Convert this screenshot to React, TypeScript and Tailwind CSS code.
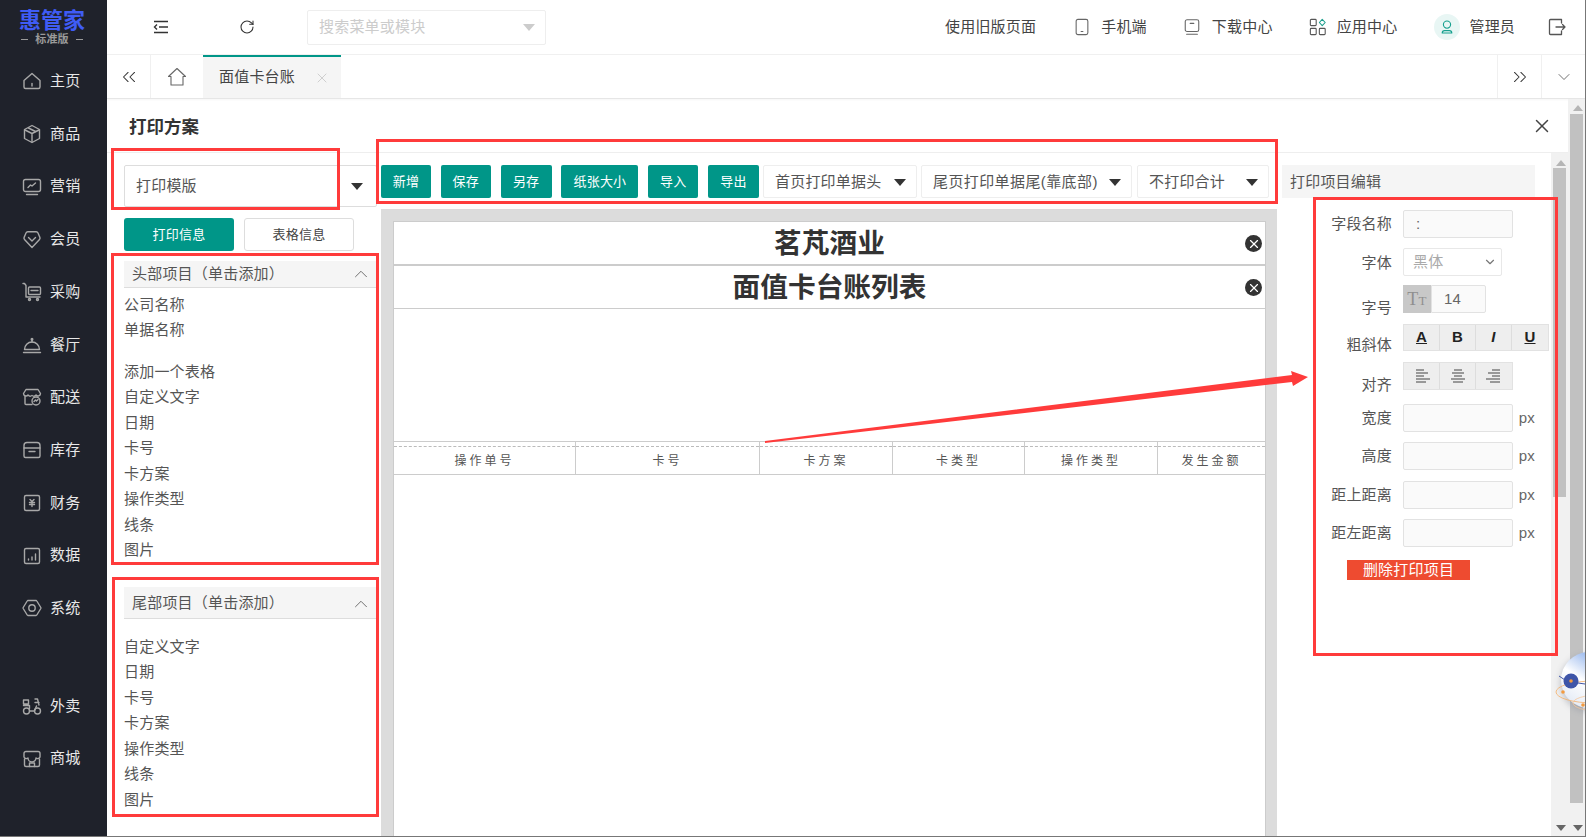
import type { ReactNode } from "react";
import { ChevronDown, ChevronUp, ChevronsLeft, ChevronsRight, RotateCw, X } from "lucide-react";

const Ico = ({ children, size = 20, color = "#a8a8a8", sw = 1.4 }: { children: ReactNode; size?: number; color?: string; sw?: number }) => (
  <svg width={size} height={size} viewBox="0 0 20 20" fill="none" stroke={color} strokeWidth={sw} strokeLinejoin="round" strokeLinecap="round" className="shrink-0">
    {children}
  </svg>
);

const navTop: { label: string; icon: ReactNode }[] = [
  { label: "主页", icon: <><path d="M2 9.5 10 2.5l8 7v6.5a1.5 1.5 0 0 1-1.5 1.5h-13A1.5 1.5 0 0 1 2 16z" /><path d="M10 12.5v2.5" /></> },
  { label: "商品", icon: <><path d="M10 1.5 17.5 5.5v9L10 18.5l-7.5-4v-9z" /><path d="M3 6l7 3.5L17 6M10 9.5v8.5" /><path d="M6.5 4 13.5 7.5" /></> },
  { label: "营销", icon: <><rect x="1.5" y="2.5" width="17" height="12" rx="2" /><path d="M6 10.5l2.5-2.5 1.5 1 3.5-3" /><path d="M4.5 17.5h11" /></> },
  { label: "会员", icon: <><path d="M10 18.5 2.5 10.5a2 2 0 0 1-.3-2.3L4 4a2 2 0 0 1 1.8-1.2h8.4A2 2 0 0 1 16 4l1.8 4.2a2 2 0 0 1-.3 2.3z" /><path d="M6.5 8.5 10 12l3.5-3.5" /></> },
  { label: "采购", icon: <><path d="M1 1.5h1.5L4 3.5V15h14" /><rect x="6.5" y="5" width="12" height="7.5" rx="1" /><path d="M9 8.5h7" /><circle cx="7.5" cy="17.5" r="1" /><circle cx="15.5" cy="17.5" r="1" /></> },
  { label: "餐厅", icon: <><path d="M2.5 14.5a7.5 7.5 0 0 1 15 0z" /><path d="M1.5 17.5h17" /><path d="M10 7V5.2" /><circle cx="10" cy="4.2" r="0.8" /></> },
  { label: "配送", icon: <><path d="M4 2.5h12l2.5 4a2.5 2.5 0 0 1-4.5 1.5 3 3 0 0 1-4 .5 3 3 0 0 1-4-.5A2.5 2.5 0 0 1 1.5 6.5z" /><path d="M3 9v7.5a1 1 0 0 0 1 1h6" /><circle cx="14" cy="14" r="4" /><path d="M12 14.5l1.5-1.5 1 1 1.5-1.5" /></> },
  { label: "库存", icon: <><path d="M2 8V5.5A3 3 0 0 1 5 2.5h10a3 3 0 0 1 3 3V8z" /><path d="M2 8v8a1.5 1.5 0 0 0 1.5 1.5h13A1.5 1.5 0 0 0 18 16V8" /><path d="M7 11.5h6" /></> },
  { label: "财务", icon: <><rect x="2.5" y="2.5" width="15" height="15" rx="1.5" /><path d="M8 6.5l2 2 2-2M7.5 9.5h5M7.5 11.5h5M10 8.5v5" /></> },
  { label: "数据", icon: <><rect x="2.5" y="2.5" width="15" height="15" rx="1.5" /><path d="M6.5 14v-1M10 14v-3M13.5 14V8" /></> },
  { label: "系统", icon: <><path d="M6 2.5h8a1 1 0 0 1 .8.5l4 6.5a1 1 0 0 1 0 1l-4 6.5a1 1 0 0 1-.8.5H6a1 1 0 0 1-.8-.5l-4-6.5a1 1 0 0 1 0-1l4-6.5A1 1 0 0 1 6 2.5z" /><circle cx="10" cy="10" r="3.2" /></> },
];

const navBottom: { label: string; icon: ReactNode }[] = [
  { label: "外卖", icon: <><circle cx="4.5" cy="15" r="3" /><circle cx="15.5" cy="15" r="3" /><path d="M7.5 15h5l2-5M1.5 9.5h6v3M1.5 4h5v4h-5zM13 3h2.5l1.5 6M13 6.5h4" /></> },
  { label: "商城", icon: <><path d="M4 2.5h12a2 2 0 0 1 2 2V8a2.5 2.5 0 0 1-4 1 3.5 3.5 0 0 1-8 0 2.5 2.5 0 0 1-4-1V4.5a2 2 0 0 1 2-2z" /><path d="M2.5 10v6a1.5 1.5 0 0 0 1.5 1.5h12a1.5 1.5 0 0 0 1.5-1.5v-6" /><path d="M7.5 17.5V14h5v3.5" /></> },
];

const headItemsA = ["公司名称", "单据名称"];
const headItemsB = ["添加一个表格", "自定义文字", "日期", "卡号", "卡方案", "操作类型", "线条", "图片"];
const footItems = ["自定义文字", "日期", "卡号", "卡方案", "操作类型", "线条", "图片"];

const toolButtons = [
  { label: "新增", w: "w-[50px]" },
  { label: "保存", w: "w-[50px]" },
  { label: "另存", w: "w-[51px]" },
  { label: "纸张大小", w: "w-[77px]" },
  { label: "导入", w: "w-[50px]" },
  { label: "导出", w: "w-[51px]" },
];

const tableCols = [
  { label: "操作单号", w: "w-[182px]" },
  { label: "卡号", w: "w-[184px]" },
  { label: "卡方案", w: "w-[133px]" },
  { label: "卡类型", w: "w-[132px]" },
  { label: "操作类型", w: "w-[133px]" },
  { label: "发生金额", w: "flex-1" },
];

const Caret = ({ className = "" }: { className?: string }) => (
  <svg width="12" height="7" viewBox="0 0 12 7" className={`shrink-0 ${className}`}>
    <polygon points="0,0 12,0 6,7" fill="currentColor" />
  </svg>
);

const CloseDot = () => (
  <span className="absolute right-[3px] top-[13px] flex h-[17px] w-[17px] items-center justify-center rounded-full bg-[#333] text-white">
    <X size={14} strokeWidth={2} />
  </span>
);

const ItemRow = ({ text }: { text: string }) => (
  <div className="flex h-[25.5px] items-center text-[15px] text-[#555]">{text}</div>
);

const PxInput = ({ label, className }: { label: string; className: string }) => (
  <div className={`flex h-[28px] items-center ${className}`}>
    <span className="w-[110px] shrink-0 text-right text-[15px] text-[#555]">{label}</span>
    <span className="ml-[11px] h-full w-[110px] rounded-[2px] border border-[#e2e2e2] bg-[#fafafa]" />
    <span className="ml-[6px] text-[15px] text-[#666]">px</span>
  </div>
);

const ScrollArrow = ({ up = false }: { up?: boolean }) => (
  <svg width="10" height="6" viewBox="0 0 10 6" className="mx-auto shrink-0 text-[#666]">
    <polygon points={up ? "0,6 10,6 5,0" : "0,0 10,0 5,6"} fill={up ? "#b5b5b5" : "currentColor"} />
  </svg>
);

export default function App() {
  return (
    <div className="relative flex h-[837px] w-[1586px] overflow-hidden border-r border-b border-[#777] bg-white font-['Liberation_Sans','Noto_Sans_CJK_SC',sans-serif] tracking-[0.2px] text-[#333]">
      {/* Sidebar */}
      <aside className="flex w-[107px] shrink-0 flex-col bg-[#1f222b]">
        <div className="flex h-[55px] flex-col items-center pt-[9px] pr-[3px]">
          <div className="text-[22px] leading-[24px] font-bold tracking-normal text-[#3f5cf5]">惠管家</div>
          <div className="flex items-center gap-[7px] text-[11px] leading-[13px] font-bold text-[#9a9a9a]">
            <span className="h-[1px] w-[7px] bg-[#9a9a9a]" />
            标准版
            <span className="h-[1px] w-[7px] bg-[#9a9a9a]" />
          </div>
        </div>
        {navTop.map((n) => (
          <div key={n.label} className="flex h-[52.7px] items-center gap-[8px] pl-[22px] text-[15px] text-[#e8e8e8]">
            <Ico>{n.icon}</Ico>
            {n.label}
          </div>
        ))}
        <div className="h-[45px]" />
        {navBottom.map((n) => (
          <div key={n.label} className="flex h-[52.7px] items-center gap-[8px] pl-[22px] text-[15px] text-[#e8e8e8]">
            <Ico>{n.icon}</Ico>
            {n.label}
          </div>
        ))}
      </aside>

      <div className="flex min-w-0 flex-1 flex-col">
        {/* Top bar */}
        <header className="flex h-[55px] shrink-0 items-center border-b border-[#f0f0f0] text-[15px] text-[#444]">
          <svg width="16" height="14" viewBox="0 0 16 14" fill="none" stroke="#333" strokeWidth="1.4" className="ml-[46px] shrink-0">
            <path d="M1 1.5h14M6 7h9M1 12.5h14M4 4.5 1.5 7 4 9.5" />
          </svg>
          <RotateCw size={16} strokeWidth={1.6} className="ml-[70px] shrink-0 text-[#333]" />
          <div className="ml-[52px] flex h-[35px] w-[239px] items-center justify-between rounded-[2px] border border-[#eee] pr-[10px] pl-[11px] text-[#ccc]">
            搜索菜单或模块
            <Caret className="text-[#ccc]" />
          </div>
          <span className="ml-[399px]">使用旧版页面</span>
          <span className="ml-[37px]">
            <Ico size={18} color="#666" sw={1.2}>
              <rect x="3.5" y="1.5" width="13" height="17" rx="2" />
              <path d="M9 15h2" />
            </Ico>
          </span>
          <span className="ml-[10px]">手机端</span>
          <span className="ml-[36px]">
            <Ico size={18} color="#666" sw={1.2}>
              <rect x="2.5" y="2" width="15" height="13" rx="2" />
              <path d="M8 6h4M4 18h12" />
            </Ico>
          </span>
          <span className="ml-[11px]">下载中心</span>
          <span className="ml-[36px]">
            <Ico size={18} color="#555" sw={1.2}>
              <rect x="1.5" y="1.5" width="6.5" height="7" rx="1" />
              <rect x="1.5" y="11.5" width="6.5" height="7" rx="1" />
              <rect x="11.5" y="11.5" width="6.5" height="7" rx="1" />
              <path d="M14.7 1.5 18 5l-3.3 3.5L11.5 5z" stroke="#1a9e8c" />
            </Ico>
          </span>
          <span className="ml-[10px]">应用中心</span>
          <span className="ml-[37px] flex h-[26px] w-[26px] items-center justify-center rounded-full bg-[#e8f6f4]">
            <Ico size={16} color="#15a08e" sw={1.4}>
              <circle cx="10" cy="7" r="4.5" />
              <path d="M4 17.5a3 3 0 0 1 3-3h6a3 3 0 0 1 3 3z" />
            </Ico>
          </span>
          <span className="ml-[9px]">管理员</span>
          <span className="ml-[32px]">
            <Ico size={20} color="#555" sw={1.3}>
              <path d="M14.5 6V2.5h-11a1 1 0 0 0-1 1v13a1 1 0 0 0 1 1h11V14" />
              <path d="M9 10h9M15.5 7.5 18 10l-2.5 2.5" />
            </Ico>
          </span>
        </header>

        {/* Tabs */}
        <div className="flex h-[44px] shrink-0 items-stretch border-b border-[#e6e6e6] shadow-[0_1px_2px_rgba(0,0,0,0.04)]">
          <div className="flex w-[44px] items-center justify-center border-r border-[#f0f0f0]">
            <ChevronsLeft size={22} strokeWidth={1.1} className="text-[#333]" />
          </div>
          <div className="flex w-[52px] items-center justify-center">
            <Ico size={20} color="#666" sw={1.1}>
              <path d="M1.5 9.5 10 1.5l8.5 8H16v8.5H4V9.5z" />
            </Ico>
          </div>
          <div className="flex w-[138px] items-center border-t-2 border-[#009688] bg-[#f5f5f5] pl-[16px] text-[15px] text-[#444]">
            面值卡台账
            <X size={16} strokeWidth={1} className="ml-[19px] text-[#bbb]" />
          </div>
          <div className="flex-1" />
          <div className="flex w-[44px] items-center justify-center border-l border-[#f0f0f0]">
            <ChevronsRight size={22} strokeWidth={1.1} className="text-[#333]" />
          </div>
          <div className="flex w-[44px] items-center justify-center border-l border-[#f0f0f0]">
            <ChevronDown size={20} strokeWidth={1} className="text-[#555]" />
          </div>
        </div>

        {/* Modal */}
        <div className="flex min-h-0 flex-1">
          <div className="flex min-w-0 flex-1 flex-col">
            <div className="flex h-[54px] shrink-0 items-center justify-between border-b border-[#eee] pr-[15px] pl-[22px]">
              <h2 className="pt-[3px] text-[17.5px] font-bold tracking-normal text-[#333]">打印方案</h2>
              <X size={22} strokeWidth={1.6} className="text-[#444]" />
            </div>

            <div className="flex min-h-0 flex-1">
              <div className="flex min-w-0 flex-1 overflow-hidden pt-[12px] pl-[17px]">
                {/* Left column */}
                <div className="w-[253px] shrink-0">
                  <div className="flex h-[42px] items-center justify-between rounded-[2px] border border-[#ddd] pr-[13px] pl-[11px] text-[15px] text-[#555]">
                    打印模版
                    <Caret className="text-[#333]" />
                  </div>
                  <div className="mt-[11px] flex gap-[10px]">
                    <button className="h-[33px] w-[110px] rounded-[3px] bg-[#009688] pt-[1px] text-[13px] tracking-[0.3px] text-white">打印信息</button>
                    <button className="h-[33px] w-[110px] rounded-[3px] border border-[#ddd] bg-white pt-[1px] text-[13px] tracking-[0.3px] text-[#444]">表格信息</button>
                  </div>
                  <div className="mt-[10px] flex h-[27px] items-center justify-between border-b border-[#ddd] bg-[#f5f5f5] pr-[5px] pl-[8px] text-[15px] text-[#555]">
                    头部项目（单击添加）
                    <ChevronUp size={22} strokeWidth={1} className="text-[#666]" />
                  </div>
                  <div className="mt-[4px]">
                    {headItemsA.map((t) => (
                      <ItemRow key={t} text={t} />
                    ))}
                  </div>
                  <div className="mt-[16px]">
                    {headItemsB.map((t) => (
                      <ItemRow key={t} text={t} />
                    ))}
                  </div>
                  <div className="mt-[24px] flex h-[32px] items-center justify-between border-b border-[#ddd] bg-[#f5f5f5] pt-[2px] pr-[5px] pl-[8px] text-[15px] text-[#555]">
                    尾部项目（单击添加）
                    <ChevronUp size={22} strokeWidth={1} className="text-[#666]" />
                  </div>
                  <div className="mt-[15px]">
                    {footItems.map((t) => (
                      <ItemRow key={t} text={t} />
                    ))}
                  </div>
                </div>

                {/* Middle column */}
                <div className="ml-[4px] flex w-[896px] shrink-0 flex-col">
                  <div className="flex h-[33px] shrink-0">
                    {toolButtons.map((b, i) => (
                      <button key={b.label} className={`h-full rounded-[2px] bg-[#009688] pt-[1px] text-[13px] text-white ${b.w} ${i ? "ml-[9.8px]" : ""}`}>
                        {b.label}
                      </button>
                    ))}
                    <div className="ml-[4px] flex w-[154px] items-center justify-between rounded-[2px] border border-[#eee] pt-[1px] pr-[10px] pl-[11px] text-[15px] text-[#555]">
                      首页打印单据头
                      <Caret className="text-[#333]" />
                    </div>
                    <div className="ml-[4px] flex w-[211px] items-center justify-between rounded-[2px] border border-[#eee] pt-[1px] pr-[10px] pl-[11px] text-[15px] text-[#555]">
                      <span className="tracking-[0.4px] whitespace-nowrap">尾页打印单据尾(靠底部)</span>
                      <Caret className="text-[#333]" />
                    </div>
                    <div className="ml-[5px] flex w-[132px] items-center justify-between rounded-[2px] border border-[#eee] pt-[1px] pr-[10px] pl-[11px] text-[15px] text-[#555]">
                      不打印合计
                      <Caret className="text-[#333]" />
                    </div>
                  </div>

                  <div className="mt-[11px] flex min-h-0 flex-1 flex-col overflow-hidden bg-[#dcdcdc] pt-[12px] pr-[11px] pl-[12px]">
                    <div className="flex flex-1 flex-col border-x border-t border-[#ccc] bg-white">
                      <div className="relative h-[44px] border-b-2 border-[#ccc] text-center text-[27.7px] leading-[44px] font-bold tracking-normal text-[#333]">
                        茗芃酒业
                        <CloseDot />
                      </div>
                      <div className="relative h-[43px] border-b border-[#ccc] text-center text-[27.7px] leading-[44px] font-bold tracking-normal text-[#333]">
                        面值卡台账列表
                        <CloseDot />
                      </div>
                      <div className="mt-[132px] flex h-[34px] border-y border-[#ccc]">
                        {tableCols.map((c) => (
                          <div key={c.label} className={`flex flex-col border-r border-[#ccc] last:border-r-0 ${c.w}`}>
                            <div className="h-[5px] shrink-0 border-b border-dashed border-[#bbb]" />
                            <div className="flex flex-1 items-center justify-center text-[12px] tracking-[3px] text-[#555]">{c.label}</div>
                          </div>
                        ))}
                      </div>
                    </div>
                  </div>
                </div>

                {/* Right column */}
                <div className="ml-[5px] w-[253px] shrink-0">
                  <div className="flex h-[33px] items-center bg-[#f5f5f5] pt-[1px] pl-[8px] text-[15px] text-[#555]">打印项目编辑</div>
                  <div className="mt-[12px] flex h-[28px] items-center">
                    <span className="w-[110px] shrink-0 pt-[1px] text-right text-[15px] text-[#555]">字段名称</span>
                    <span className="ml-[11px] flex h-full w-[110px] items-center rounded-[2px] border border-[#e2e2e2] bg-[#fafafa] pl-[12px] text-[15px] text-[#666]">:</span>
                  </div>
                  <div className="mt-[10px] flex h-[28px] items-center">
                    <span className="w-[110px] shrink-0 pt-[3px] text-right text-[15px] text-[#555]">字体</span>
                    <span className="ml-[11px] flex h-full w-[99px] items-center justify-between rounded-[2px] border border-[#e8e8e8] pr-[4px] pl-[9px] text-[15px] text-[#aaa]">
                      黑体
                      <ChevronDown size={14} strokeWidth={2} className="text-[#777]" />
                    </span>
                  </div>
                  <div className="mt-[9px] flex h-[28px]">
                    <span className="w-[110px] shrink-0 pt-[12px] text-right text-[15px] text-[#555]">字号</span>
                    <span className="ml-[11px] flex h-full w-[28px] items-baseline justify-center bg-[#c8c8c8] pt-[2px] font-['Liberation_Serif',serif] text-[18px] leading-[24px] text-[#8f8f8f]">
                      T<span className="text-[13px]">T</span>
                    </span>
                    <span className="flex h-full w-[55px] items-center rounded-r-[2px] border border-[#e2e2e2] bg-[#fafafa] pl-[12px] text-[15px] text-[#666]">14</span>
                  </div>
                  <div className="mt-[11px] flex h-[27px]">
                    <span className="w-[110px] shrink-0 pt-[10px] text-right text-[15px] text-[#555]">粗斜体</span>
                    <div className="ml-[11px] flex h-full shrink-0 border border-[#e2e2e2] bg-[#eee] text-[15px] text-[#222]">
                      <span className="flex w-[36px] items-center justify-center border-r border-[#ddd] font-bold underline">A</span>
                      <span className="flex w-[36px] items-center justify-center border-r border-[#ddd] font-bold">B</span>
                      <span className="flex w-[36px] items-center justify-center border-r border-[#ddd] font-bold italic">I</span>
                      <span className="flex w-[36px] items-center justify-center font-bold underline">U</span>
                    </div>
                  </div>
                  <div className="mt-[11px] flex h-[28px]">
                    <span className="w-[110px] shrink-0 pt-[12px] text-right text-[15px] text-[#555]">对齐</span>
                    <div className="ml-[11px] flex h-full shrink-0 border border-[#e2e2e2] bg-[#eee]">
                      {["M3 3h8M3 6h12M3 9h8M3 12h14M3 15h10", "M5 3h8M3 6h12M5 9h8M2 12h14M4 15h10", "M7 3h8M3 6h12M7 9h8M1 12h14M5 15h10"].map((d, i) => (
                        <span key={d} className={`flex w-[36px] items-center justify-center ${i < 2 ? "border-r border-[#ddd]" : ""}`}>
                          <svg width="18" height="18" viewBox="0 0 18 18" fill="none" stroke="#444" strokeWidth="1">
                            <path d={d} />
                          </svg>
                        </span>
                      ))}
                    </div>
                  </div>
                  <PxInput label="宽度" className="mt-[14px]" />
                  <PxInput label="高度" className="mt-[10px]" />
                  <PxInput label="距上距离" className="mt-[11px]" />
                  <PxInput label="距左距离" className="mt-[10px]" />
                  <button className="mt-[13px] ml-[65px] h-[20px] w-[123px] bg-[#ee4b30] text-[15px] leading-[20px] text-white">删除打印项目</button>
                </div>
              </div>

              {/* Inner scrollbar */}
              <div className="flex w-[17px] shrink-0 flex-col bg-[#f1f1f1] pt-[7px] pb-[5px] pl-[2px]">
                <ScrollArrow up />
                <div className="mt-[2px] h-[329px] w-[13px] bg-[#c1c1c1]" />
                <div className="flex-1" />
                <ScrollArrow />
              </div>
            </div>
          </div>

          {/* Outer scrollbar */}
          <div className="flex w-[17px] shrink-0 flex-col bg-[#f1f1f1] pt-[6px] pb-[5px] pl-[2px]">
            <ScrollArrow up />
            <div className="mt-[3px] h-[689px] w-[13px] bg-[#c1c1c1]" />
            <div className="flex-1" />
            <ScrollArrow />
          </div>
        </div>
      </div>

      {/* Red annotation boxes drawn over the screenshot */}
      <div className="absolute top-[148px] left-[111px] h-[62px] w-[229px] border-[3px] border-[#ff3b3b]" />
      <div className="absolute top-[139px] left-[376px] h-[65px] w-[902px] border-[3px] border-[#ff3b3b]" />
      <div className="absolute top-[253px] left-[111px] h-[312px] w-[268px] border-[3px] border-[#ff3b3b]" />
      <div className="absolute top-[577px] left-[112px] h-[240px] w-[267px] border-[3px] border-[#ff3b3b]" />
      <div className="absolute top-[197px] left-[1313px] h-[459px] w-[245px] border-[3px] border-[#ff3b3b]" />
      <svg className="pointer-events-none absolute top-[360px] left-[760px]" width="560" height="90" viewBox="760 360 560 90">
        <polygon points="765,441 1292,375 1291,371 1308,377 1293,386 1292,382 765,443" fill="#ff3b3b" />
      </svg>

      {/* Floating robot */}
      <svg className="absolute top-[640px] right-0" width="44" height="85" viewBox="1542 640 44 85">
        <defs>
          <linearGradient id="head" x1="0.8" y1="0" x2="0.2" y2="0.9">
            <stop offset="0" stopColor="#6f9be6" />
            <stop offset="0.6" stopColor="#ffffff" />
            <stop offset="1" stopColor="#e6ecf6" />
          </linearGradient>
          <filter id="glow" x="-30%" y="-30%" width="160%" height="160%">
            <feGaussianBlur stdDeviation="3" />
          </filter>
        </defs>
        <circle cx="1590" cy="683" r="29" fill="#8a8f9c" opacity="0.45" filter="url(#glow)" />
        <circle cx="1590" cy="680" r="28" fill="url(#head)" />
        <ellipse cx="1595" cy="692" rx="38" ry="11" fill="none" stroke="#f5b06a" strokeWidth="0.8" />
        <ellipse cx="1600" cy="703" rx="26" ry="8" fill="none" stroke="#f5c79a" strokeWidth="0.8" />
        <circle cx="1564" cy="692" r="1.8" fill="#f39a3e" />
        <circle cx="1584" cy="705" r="1.8" fill="#f39a3e" />
        <path d="M1560 676 L1566 680 M1579 683 L1586 684" stroke="#3e55a8" strokeWidth="1" />
        <circle cx="1572" cy="681" r="7.5" fill="#3e55a8" />
        <circle cx="1572" cy="681" r="1.8" fill="#f39a3e" />
      </svg>
    </div>
  );
}
